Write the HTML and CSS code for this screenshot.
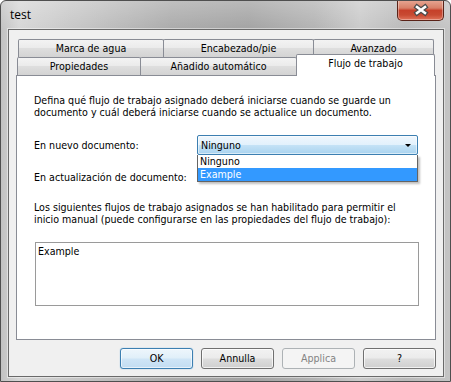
FILE: index.html
```html
<!DOCTYPE html>
<html>
<head>
<meta charset="utf-8">
<link rel="stylesheet" href="styles.css">
</head>
<body>
<div class="window">
  <div class="titlebar">
    <span class="title">test</span>
    <div class="close">
      <svg width="47" height="21" viewBox="0 0 47 21">
        <g transform="translate(24 10)" stroke-linecap="square">
          <path d="M-4 -3 L4 3 M4 -3 L-4 3" stroke="#4a4a4a" stroke-width="5" fill="none"/>
          <path d="M-4 -3 L4 3 M4 -3 L-4 3" stroke="#ffffff" stroke-width="2.6" fill="none"/>
        </g>
      </svg>
    </div>
  </div>
  <div class="client">
    <div class="tabstrip">
      <div class="tabrow row1">
        <div class="tab t-marca">Marca de agua</div>
        <div class="tab t-enc">Encabezado/pie</div>
        <div class="tab t-av">Avanzado</div>
      </div>
      <div class="tabrow row2">
        <div class="tab t-prop">Propiedades</div>
        <div class="tab t-add">Añadido automático</div>
        <div class="tab t-flujo sel">Flujo de trabajo</div>
      </div>
    </div>
    <div class="panel">
      <p class="desc">Defina qué flujo de trabajo asignado deberá iniciarse cuando se guarde un<br>documento y cuál deberá iniciarse cuando se actualice un documento.</p>
      <div class="field f1">
        <span class="label">En nuevo documento:</span>
        <div class="combo"><span class="combo-text">Ninguno</span><span class="arrow"></span></div>
        <div class="dropdown">
          <div class="opt">Ninguno</div>
          <div class="opt hl">Example</div>
        </div>
      </div>
      <div class="field f2">
        <span class="label">En actualización de documento:</span>
      </div>
      <p class="desc desc2">Los siguientes flujos de trabajo asignados se han habilitado para permitir el<br>inicio manual (puede configurarse en las propiedades del flujo de trabajo):</p>
      <div class="listbox">
        <div class="item">Example</div>
      </div>
    </div>
    <div class="buttons">
      <div class="btn default">OK</div>
      <div class="btn">Annulla</div>
      <div class="btn disabled">Applica</div>
      <div class="btn">?</div>
    </div>
  </div>
</div>
</body>
</html>
```
FILE: styles.css
```css
html, body {
  margin: 0;
  padding: 0;
  background: #ffffff;
}
body {
  font-family: "DejaVu Sans Condensed", "DejaVu Sans", sans-serif;
  font-stretch: condensed;
  font-size: 10.6px;
  color: #000;
}
.window {
  width: 451px;
  height: 382px;
  box-sizing: border-box;
  border: 1px solid #4f4f4f;
  border-radius: 6px 6px 0 0;
  background:
    linear-gradient(180deg, rgba(255,255,255,0.25), rgba(255,255,255,0) 30px),
    linear-gradient(90deg, #c2c2c2 0%, #d6d6d6 4%, #c4c4c4 18%, #aaaaaa 38%, #a2a2a2 55%, #b3b3b3 70%, #cacaca 80%, #b9b9b9 90%, #c4c4c4 100%);
  display: flex;
  flex-direction: column;
  overflow: hidden;
}
.titlebar {
  height: 28px;
  flex: none;
  display: flex;
  justify-content: space-between;
  align-items: flex-start;
  padding-left: 9px;
  padding-right: 6px;
}
.title {
  font-family: "Open Sans", "Noto Sans", sans-serif;
  font-stretch: normal;
  font-size: 12px;
  line-height: 16px;
  padding-top: 6px;
  color: #000;
}
.close {
  width: 47px;
  height: 21px;
  margin-top: -1px;
  box-sizing: border-box;
  border: 1px solid #5a2318;
  border-top: none;
  border-radius: 0 0 5px 5px;
  background: linear-gradient(180deg, #e8a895 0%, #d88068 40%, #c6402a 52%, #c84a32 75%, #e0735a 100%);
  box-shadow: inset 0 0 0 1px rgba(255,255,255,0.35);
  overflow: hidden;
}
.close svg {
  display: block;
  margin-left: -1px;
}
.client {
  flex: none;
  height: 348px;
  box-sizing: border-box;
  margin: 0 6px 4px 7px;
  border: 1px solid #6a6a6a;
  box-shadow: 0 0 0 1px rgba(255,255,255,0.45);
  background: #f0f0f0;
  padding: 9px 7px 7px 7px;
  display: flex;
  flex-direction: column;
}
.tabstrip {
  height: 36px;
  flex: none;
  display: flex;
  flex-direction: column;
}
.tabrow {
  display: flex;
  height: 18px;
}
.row1 { padding-left: 2px; }
.row2 { padding-left: 1px; }
.tab {
  box-sizing: border-box;
  height: 18px;
  border: 1px solid #898c95;
  border-bottom: none;
  border-radius: 2px 2px 0 0;
  background: linear-gradient(180deg, #f3f3f3 0%, #ebebeb 45%, #dedede 50%, #d3d3d3 100%);
  text-align: center;
  line-height: 17px;
  margin-left: -1px;
  white-space: nowrap;
}
.tab:first-child { margin-left: 0; }
.t-marca { width: 146px; }
.t-enc { width: 151px; }
.t-av { width: 121px; }
.t-prop { width: 124px; }
.t-add { width: 157px; }
.t-flujo { width: 139px; }
.tab.sel {
  height: 22px;
  margin-top: -3px;
  background: #ffffff;
  position: relative;
  z-index: 1;
  line-height: 17px;
}
.panel {
  flex: none;
  height: 265px;
  box-sizing: border-box;
  border: 1px solid #898c95;
  background: #ffffff;
  padding: 18px 16px 0 17px;
}
.desc {
  margin: 0;
  line-height: 12px;
  white-space: nowrap;
}
.desc2 { margin-top: 14px; }
.field {
  display: flex;
  align-items: center;
  height: 20px;
  position: relative;
}
.f1 { margin-top: 17px; }
.f2 { margin-top: 12px; }
.label {
  width: 163px;
  flex: none;
  white-space: nowrap;
}
.combo {
  width: 221px;
  height: 20px;
  box-sizing: border-box;
  border: 1px solid #3c7fb1;
  border-radius: 2px;
  background: linear-gradient(180deg, #f0f7fd 0%, #e2f1fc 48%, #c4e2f6 52%, #a9d3ef 100%);
  box-shadow: inset 0 0 0 1px rgba(255,255,255,0.55);
  display: flex;
  align-items: center;
  justify-content: space-between;
  padding: 0 6px 0 3px;
}
.arrow {
  width: 0;
  height: 0;
  border-left: 3px solid transparent;
  border-right: 3px solid transparent;
  border-top: 3px solid #000;
}
.dropdown {
  position: absolute;
  left: 163px;
  top: 20px;
  width: 221px;
  box-sizing: border-box;
  border: 1px solid #646464;
  border-top: none;
  background: #ffffff;
  box-shadow: 2px 2px 2px rgba(0,0,0,0.25);
  z-index: 2;
}
.opt {
  height: 13px;
  line-height: 13px;
  padding-left: 2px;
}
.opt.hl {
  background: #3399ff;
  color: #ffffff;
}
.listbox {
  margin: 17px 0 0 1px;
  width: 384px;
  height: 64px;
  box-sizing: border-box;
  border: 1px solid #9a9a9a;
  padding: 2px 2px;
  line-height: 13px;
}
.buttons {
  display: flex;
  justify-content: flex-end;
  gap: 8px;
  margin-top: 8px;
}
.btn {
  width: 73px;
  height: 21px;
  box-sizing: border-box;
  border: 1px solid #707070;
  border-radius: 3px;
  background: linear-gradient(180deg, #f2f2f2 0%, #ebebeb 48%, #dddddd 52%, #cfcfcf 100%);
  box-shadow: inset 0 0 0 1px rgba(255,255,255,0.7);
  text-align: center;
  line-height: 19px;
}
.btn.default {
  border-color: #3c7fb1;
  background: linear-gradient(180deg, #eef6fc 0%, #e0eff9 48%, #cfe5f6 52%, #c2ddf2 100%);
  box-shadow: inset 0 0 0 1px rgba(255,255,255,0.6), 0 0 1px #4fa3dc;
}
.btn.disabled {
  border-color: #adb2b5;
  background: #f4f4f4;
  box-shadow: none;
  color: #838383;
}
```
